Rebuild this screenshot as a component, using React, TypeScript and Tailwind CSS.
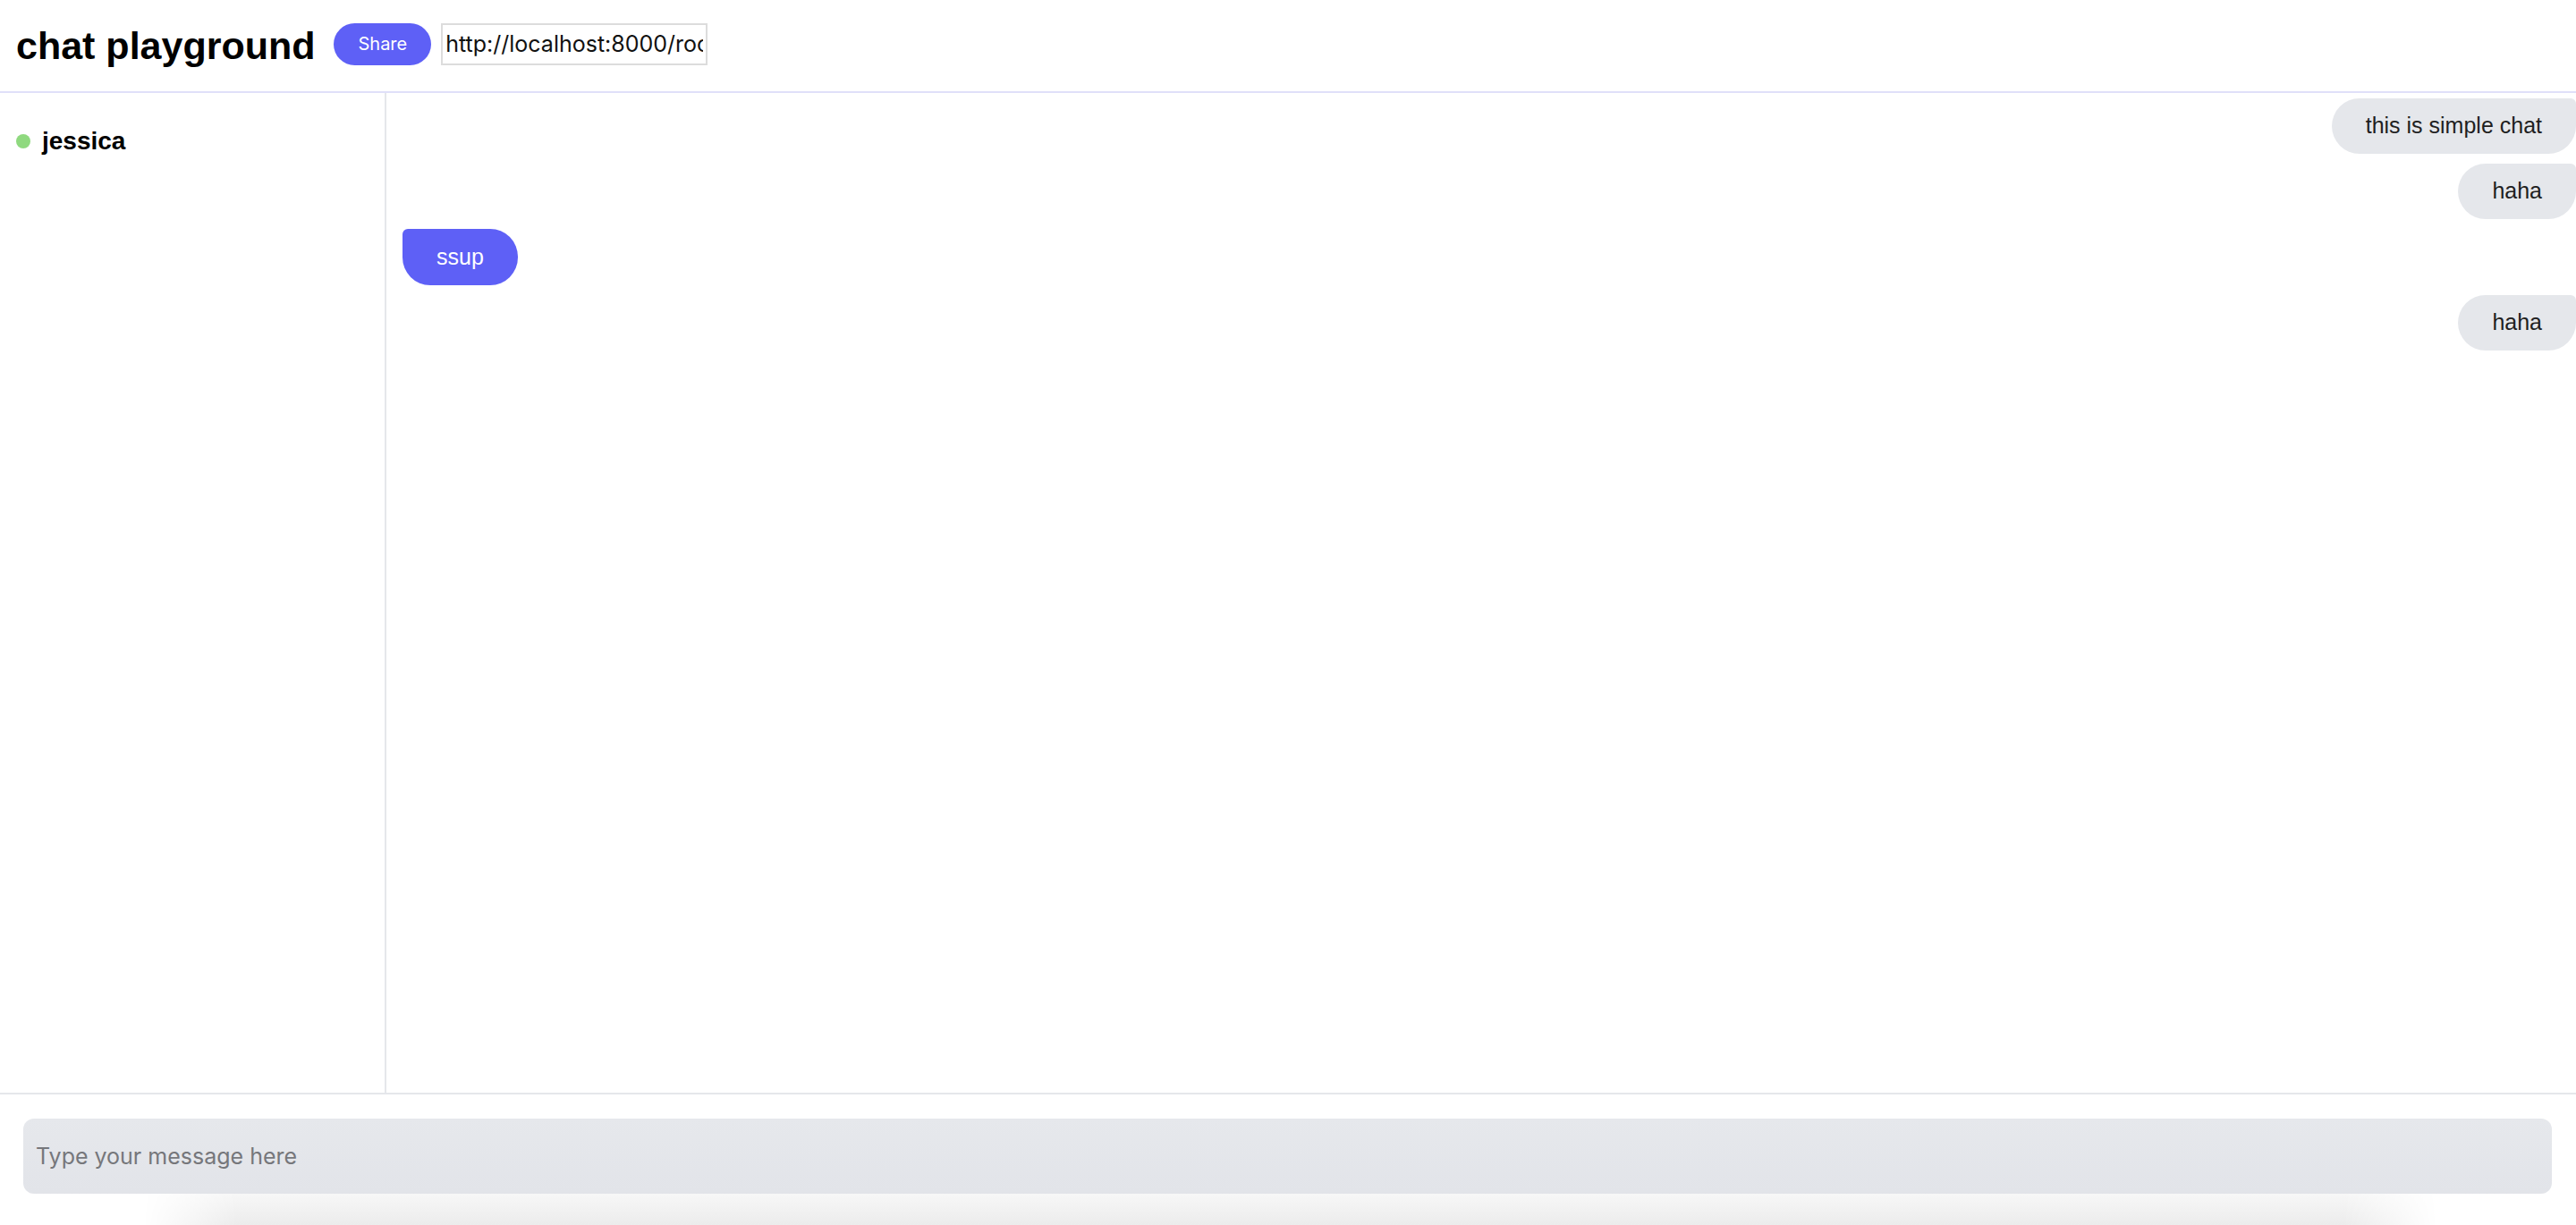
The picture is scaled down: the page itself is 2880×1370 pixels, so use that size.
import { useState } from "react";

type Msg = { id: number; text: string; mine: boolean };

const messages: Msg[] = [
  { id: 1, text: "this is simple chat", mine: true },
  { id: 2, text: "haha", mine: true },
  { id: 3, text: "ssup", mine: false },
  { id: 4, text: "haha", mine: true },
];

function Bubble({ msg }: { msg: Msg }) {
  if (msg.mine) {
    return (
      <div className="self-end h-[62px] flex items-center px-[38px] bg-[#e5e7eb] text-[#1f1f1f] text-[25px] rounded-[31px] rounded-tr-[6px]">
        {msg.text}
      </div>
    );
  }
  return (
    <div className="self-start h-[63px] flex items-center px-[38px] bg-[#5e60f6] text-white text-[25px] rounded-[31px] rounded-tl-[6px]">
      {msg.text}
    </div>
  );
}

export default function App() {
  const [draft, setDraft] = useState("");

  return (
    <div className="h-screen w-full flex flex-col bg-white font-['Liberation_Sans',Arial,sans-serif] overflow-hidden">
      {/* header */}
      <header className="h-[104px] shrink-0 flex items-center gap-[21px] pl-[18px] pr-[17px] pb-[4px] border-b-2 border-[#e0e0f9]">
        <h1 className="text-[43px] font-bold text-black leading-none mt-[4px]">chat playground</h1>
        <div className="flex items-center gap-[11px]">
          <button className="h-[47px] px-[27px] rounded-full bg-[#5e60f6] text-white text-[20px] font-['Inter',sans-serif]">
            Share
          </button>
          <input
            readOnly
            value="http://localhost:8000/room/jessica"
            className="w-[298px] h-[47px] border-2 border-[#dcdcdc] px-[3px] text-[25px] text-[#111] font-['Inter',sans-serif] outline-none"
          />
        </div>
      </header>

      <div className="flex-1 flex min-h-0">
        {/* sidebar */}
        <aside className="w-[432px] shrink-0 border-r-2 border-[#e5e7eb] pt-[40px] pl-[18px]">
          <div className="flex items-center gap-[13px]">
            <span className="w-[16px] h-[16px] rounded-full bg-[#8fd97f]" />
            <span className="text-[28px] font-bold text-black leading-none">jessica</span>
          </div>
        </aside>

        {/* messages */}
        <main className="flex-1 flex flex-col gap-[11px] pt-[6px] pl-[18px]">
          {messages.map((m) => (
            <Bubble key={m.id} msg={m} />
          ))}
        </main>
      </div>

      {/* composer */}
      <footer className="h-[148px] shrink-0 flex flex-col border-t-2 border-[#e5e7eb]">
        <div className="pt-[27px] pl-[26px] pr-[27px]">
          <input
            value={draft}
            onChange={(e) => setDraft(e.target.value)}
            placeholder="Type your message here"
            className="w-full h-[84px] rounded-[12px] bg-gradient-to-b from-[#e6e8ec] to-[#e2e4e9] px-[14px] text-[25px] text-[#222] placeholder:text-[#76777b] font-['Inter',sans-serif] outline-none"
          />
        </div>
        {/* soft glow under the composer */}
        <div className="flex-1 bg-gradient-to-b from-[#f7f7f7] to-[#ececec] [mask-image:linear-gradient(to_right,transparent_160px,black_265px,black_2620px,transparent_2725px)]" />
      </footer>
    </div>
  );
}
